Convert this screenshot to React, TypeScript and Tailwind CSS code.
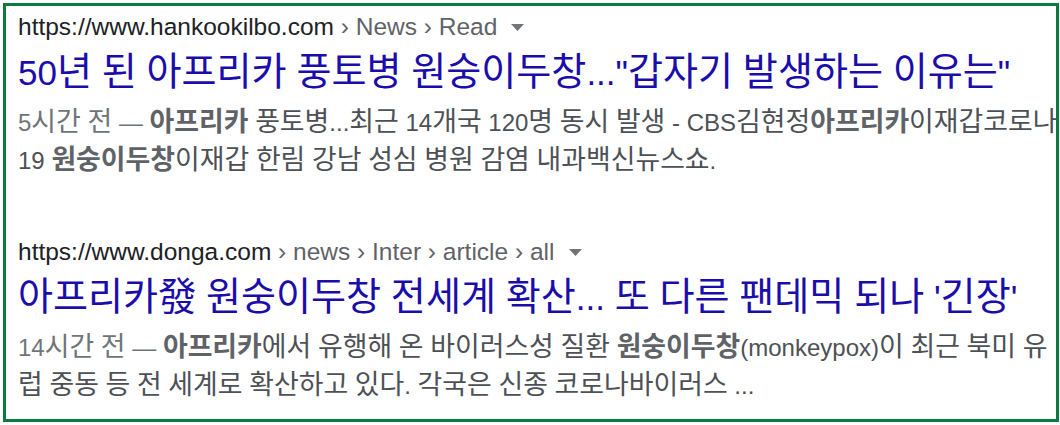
import React from "react";

const FONT = "font-['Liberation_Sans','Noto_Sans_CJK_KR',Arial,sans-serif]";

// Hangul/Hanja runs get a slightly larger size so they take the width of the reference font
function K({ children, big = "text-[1.12em]" }: { children: string; big?: string }) {
  const parts = children.split(/([\uAC00-\uD7A3\u4E00-\u9FFF]+)/);
  return (
    <>
      {parts.map((p, i) =>
        i % 2 === 1 ? (
          <span key={i} className={`${big} leading-none`}>
            {p}
          </span>
        ) : (
          p
        )
      )}
    </>
  );
}

function B({ children }: { children: string }) {
  return (
    <b className="font-bold text-[#5f6368]">
      <K>{children}</K>
    </b>
  );
}

interface Result {
  domain: string;
  crumbs: string[];
  title: string;
  lines: React.ReactNode[];
}

const results: Result[] = [
  {
    domain: "https://www.hankookilbo.com",
    crumbs: ["News", "Read"],
    title: "50년 된 아프리카 풍토병 원숭이두창...\"갑자기 발생하는 이유는\"",
    lines: [
      <>
        <span className="text-[#70757a]">
          <K>5시간 전 — </K>
        </span>
        <B>아프리카</B>
        <K> 풍토병...최근 14개국 120명 동시 발생 - CBS김현정</K>
        <B>아프리카</B>
        <K>이재갑코로나</K>
      </>,
      <>
        19 <B>원숭이두창</B>
        <K>이재갑 한림 강남 성심 병원 감염 내과백신뉴스쇼.</K>
      </>,
    ],
  },
  {
    domain: "https://www.donga.com",
    crumbs: ["news", "Inter", "article", "all"],
    title: "아프리카發 원숭이두창 전세계 확산... 또 다른 팬데믹 되나 '긴장'",
    lines: [
      <>
        <span className="text-[#70757a]">
          <K>14시간 전 — </K>
        </span>
        <B>아프리카</B>
        <K>에서 유행해 온 바이러스성 질환 </K>
        <B>원숭이두창</B>
        <K>(monkeypox)이 최근 북미 유</K>
      </>,
      <K>럽 중동 등 전 세계로 확산하고 있다. 각국은 신종 코로나바이러스 ...</K>,
    ],
  },
];

function SearchResult({ r }: { r: Result }) {
  return (
    <div className="flex flex-col">
      <div className="flex items-center h-[30px] text-[24.5px] leading-[30px] whitespace-nowrap">
        <span className="text-[#202124]">{r.domain}</span>
        <span className="text-[#5f6368] whitespace-pre">
          {r.crumbs.map((c) => (
            <span key={c}>{" › " + c}</span>
          ))}
        </span>
        <svg width="13" height="7" viewBox="0 0 13 7" className="ml-[14px]">
          <path d="M0 0 L13 0 L6.5 7 Z" fill="#70757a" />
        </svg>
      </div>
      <div className="mt-[9px] h-[44px] text-[35px] leading-[44px] text-[#1a0dab] whitespace-nowrap">
        <K big="text-[1.088em]">{r.title}</K>
      </div>
      <div className="mt-[9px] text-[24px] leading-[38px] text-[#4d5156]">
        {r.lines.map((l, i) => (
          <div key={i} className="whitespace-nowrap">
            {l}
          </div>
        ))}
      </div>
    </div>
  );
}

export default function App() {
  return (
    <div className={`bg-white w-[1060px] h-[425px] pt-[3px] pl-[3px] ${FONT}`}>
      <div className="w-[1056px] h-[419px] border-[3px] border-[#0b7a3f] pl-[12px] pt-[6px] overflow-hidden">
        <SearchResult r={results[0]} />
        <div className="h-[57px]" />
        <SearchResult r={results[1]} />
      </div>
    </div>
  );
}
